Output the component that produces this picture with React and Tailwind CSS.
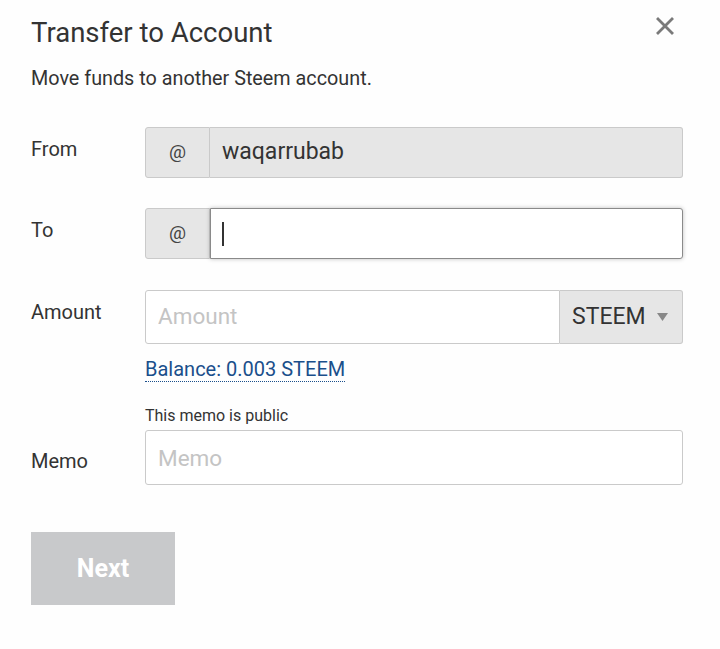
import { useState } from 'react'

function AtAddon() {
  return (
    <span className="flex w-[65px] shrink-0 items-center justify-center border border-[#cacaca] bg-[#e6e6e6] text-[19px] text-[#444] rounded-l-[3px]">
      @
    </span>
  )
}

function Row({ label, labelClass = '', children, className = '' }) {
  return (
    <div className={`grid grid-cols-[114px_1fr] items-center ${className}`}>
      <label className={`text-[20px] text-[#333] ${labelClass}`}>{label}</label>
      {children}
    </div>
  )
}

export default function App() {
  const [to, setTo] = useState('')
  const [amount, setAmount] = useState('')
  const [memo, setMemo] = useState('')

  return (
    <div className="min-h-screen bg-[#fefefe] pl-[31px] pr-[37px] pt-[16px] font-['Roboto','Noto_Sans',sans-serif] text-[#333]">
      {/* Header */}
      <div className="flex items-start justify-between">
        <h1 className="text-[27.5px] leading-[34px] text-[#333]">Transfer to Account</h1>
        <button className="mr-[7px] mt-[-1px] p-[2px] text-[#7a7a7a]" aria-label="Close">
          <svg width="18" height="18" viewBox="0 0 18 18">
            <path d="M2 2L16 16M16 2L2 16" stroke="currentColor" strokeWidth="2.8" strokeLinecap="square" />
          </svg>
        </button>
      </div>
      <p className="mt-[17px] text-[19.8px] leading-[24px] text-[#333]">Move funds to another Steem account.</p>

      {/* From */}
      <Row label="From" labelClass="-translate-y-[4px]" className="mt-[36px]">
        <div className="flex h-[51px]">
          <AtAddon />
          <div className="flex flex-1 items-center border border-l-0 border-[#cacaca] bg-[#e6e6e6] px-[12px] text-[23px] text-[#333] rounded-r-[3px]">
            waqarrubab
          </div>
        </div>
      </Row>

      {/* To */}
      <Row label="To" labelClass="-translate-y-[4px]" className="mt-[30px]">
        <div className="flex h-[51px]">
          <AtAddon />
          <div className="relative flex flex-1">
            <input
              value={to}
              onChange={e => setTo(e.target.value)}
              className="w-full border border-[#8a8a8a] bg-white px-[12px] text-[23px] text-[#333] outline-none rounded-r-[3px] shadow-[0_0_4px_rgba(0,0,0,0.25)]"
            />
            {/* caret of the focused field */}
            {!to && <span className="pointer-events-none absolute left-[12px] top-[14px] h-[24px] w-[2px] bg-[#333]" />}
          </div>
        </div>
      </Row>

      {/* Amount */}
      <Row label="Amount" labelClass="-translate-y-[5px]" className="mt-[31px]">
        <div className="flex h-[54px]">
          <input
            value={amount}
            onChange={e => setAmount(e.target.value)}
            placeholder="Amount"
            className="min-w-0 flex-1 border border-[#cacaca] bg-white px-[12px] text-[22.5px] text-[#333] outline-none placeholder:text-[#c4c4c4] rounded-l-[3px]"
          />
          <div className="flex w-[123px] items-center justify-between border border-l-0 border-[#cacaca] bg-[#e6e6e6] pl-[12px] pr-[14px] text-[23px] text-[#333] rounded-r-[3px]">
            STEEM
            <svg width="11" height="8" viewBox="0 0 11 8">
              <path d="M0 0H11L5.5 8Z" fill="#888" />
            </svg>
          </div>
        </div>
      </Row>
      <div className="ml-[114px] mt-[13px] leading-[24px]">
        <span className="border-b border-dotted border-[#1a4f8b] text-[20px] text-[#1a4f8b]">
          Balance: 0.003 STEEM
        </span>
      </div>

      {/* Memo */}
      <div className="ml-[114px] mt-[24px] text-[16px] leading-[18px] text-[#333]">This memo is public</div>
      <Row label="Memo" labelClass="translate-y-[3px]" className="mt-[5px]">
        <input
          value={memo}
          onChange={e => setMemo(e.target.value)}
          placeholder="Memo"
          className="h-[55px] border border-[#cacaca] bg-white px-[12px] text-[22.5px] text-[#333] outline-none placeholder:text-[#c4c4c4] rounded-[3px]"
        />
      </Row>

      <button
        disabled
        className="mt-[47px] h-[73px] w-[144px] bg-[#c8c9cb] text-[25px] font-bold text-white"
      >
        Next
      </button>
    </div>
  )
}
